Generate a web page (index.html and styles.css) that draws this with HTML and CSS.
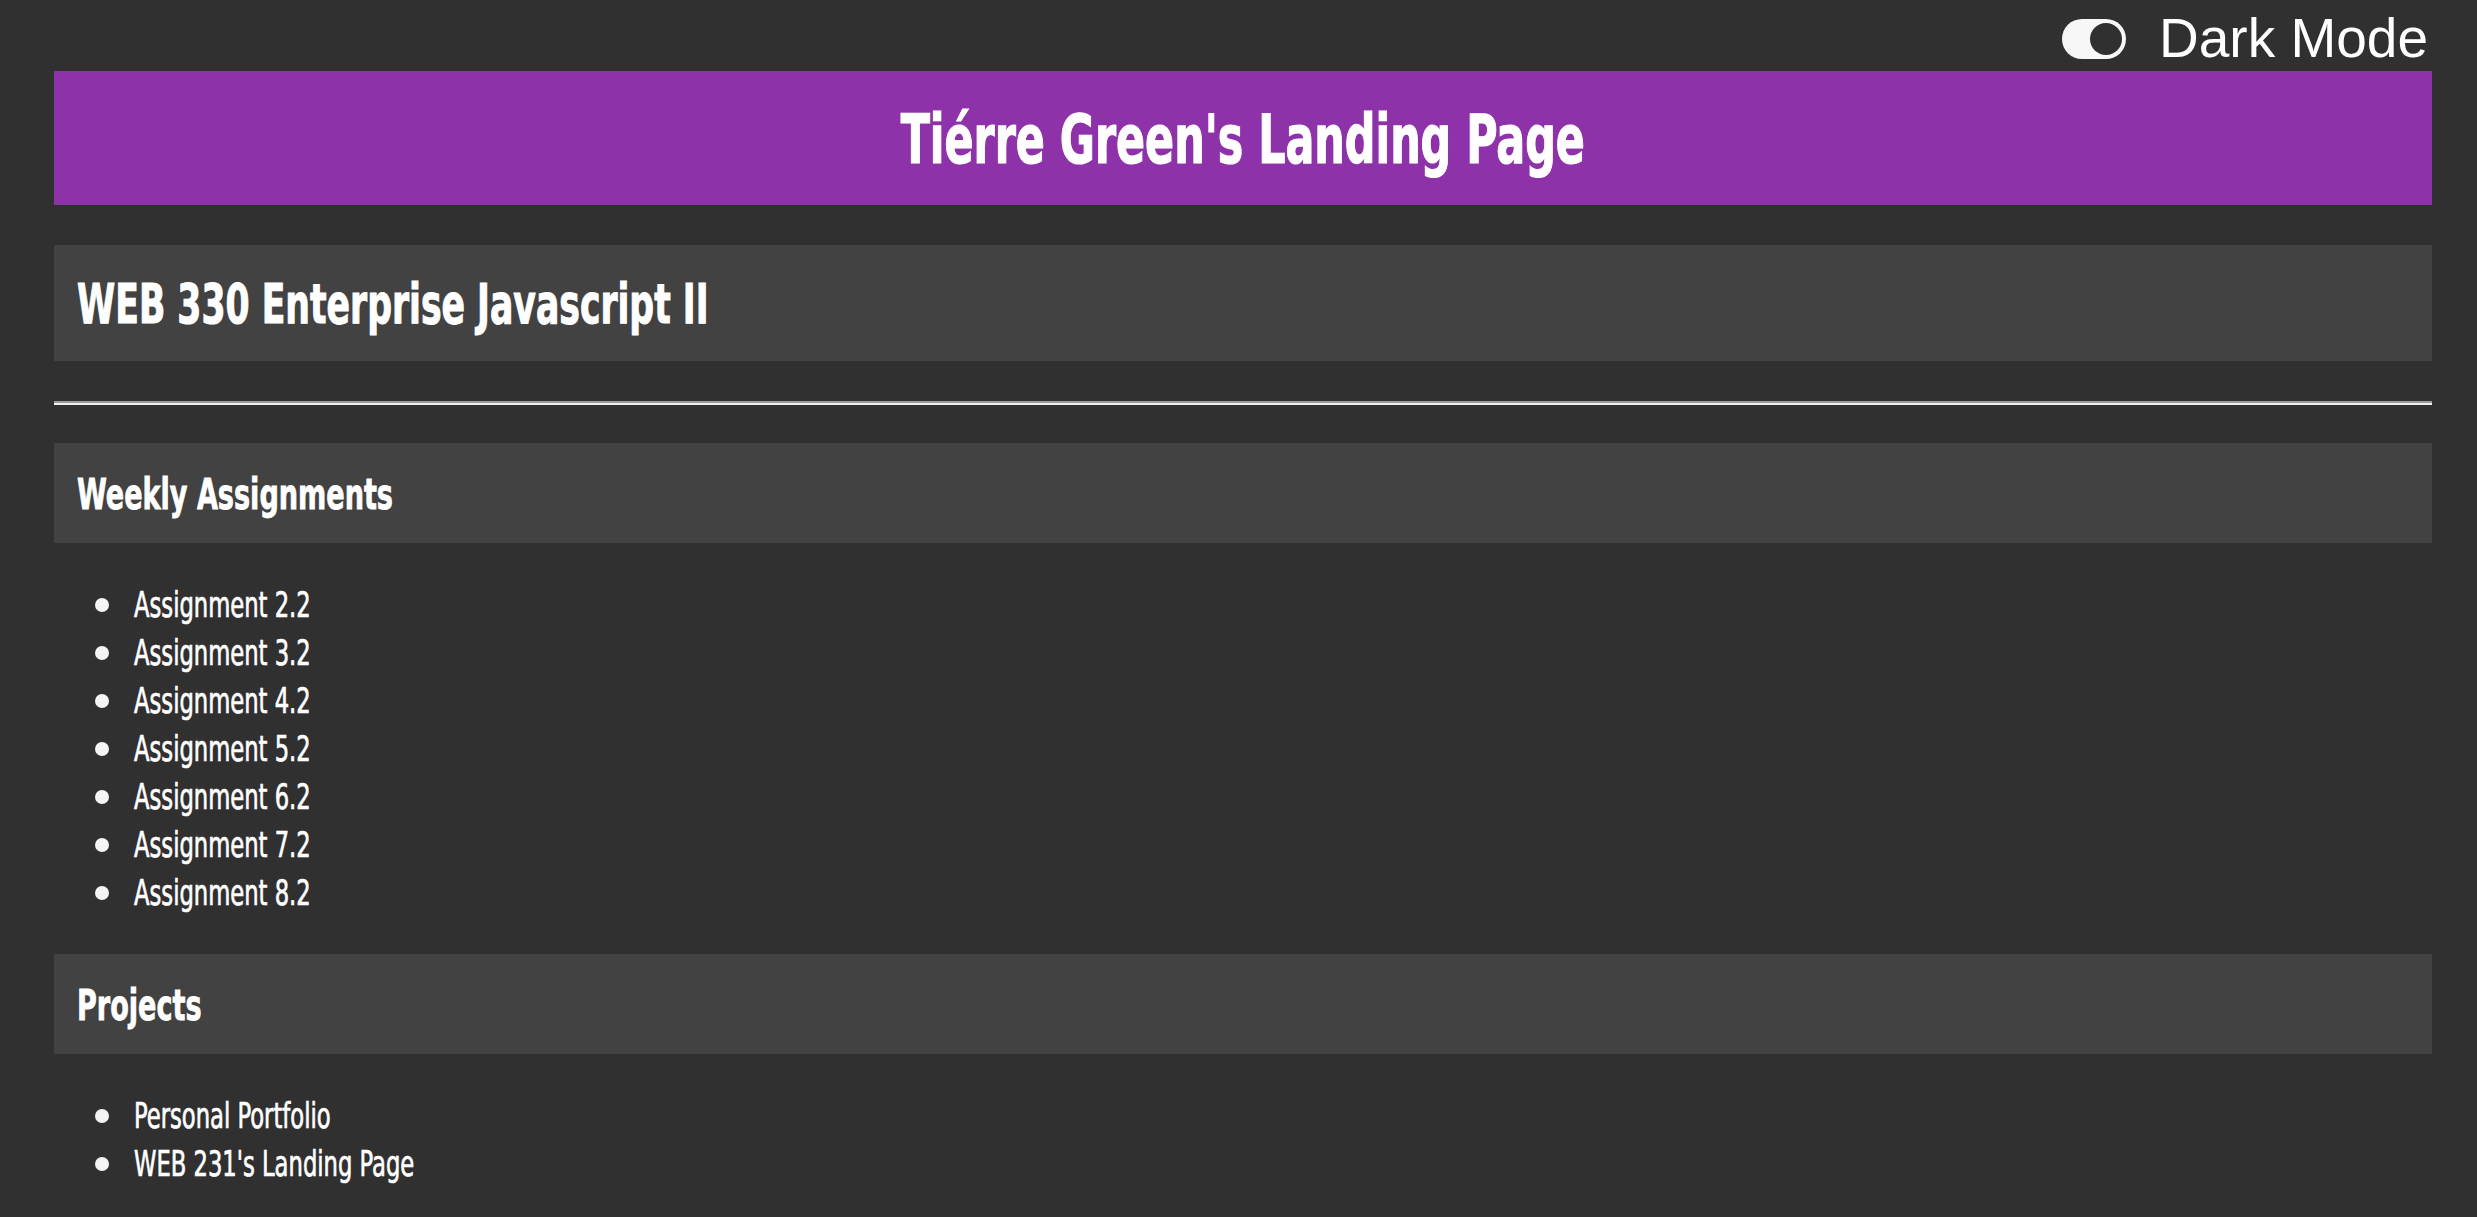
FILE: index.html
```html
<!DOCTYPE html>
<html lang="en">
<head>
<meta charset="utf-8">
<title>Tiérre Green's Landing Page</title>
<link rel="stylesheet" href="styles.css">
</head>
<body>
<div class="page">
  <div class="topbar">
    <svg class="toggle" width="64" height="40" viewBox="0 0 64 40" aria-hidden="true">
      <rect x="0" y="0" width="64" height="40" rx="20" ry="20" fill="#f7f7f7"/>
      <circle cx="44" cy="20" r="16" fill="#303030"/>
    </svg>
    <span class="mode-label">Dark Mode</span>
  </div>
  <header class="banner">
    <h1 class="banner-title"><span class="narrow narrow-center">Tiérre Green's Landing Page</span></h1>
  </header>
  <section class="course">
    <h2 class="course-title"><span class="narrow">WEB 330 Enterprise Javascript II</span></h2>
  </section>
  <hr class="divider">
  <section class="section-head">
    <h3 class="section-title"><span class="narrow">Weekly Assignments</span></h3>
  </section>
  <ul class="items">
    <li class="item"><span class="narrow">Assignment 2.2</span></li>
    <li class="item"><span class="narrow">Assignment 3.2</span></li>
    <li class="item"><span class="narrow">Assignment 4.2</span></li>
    <li class="item"><span class="narrow">Assignment 5.2</span></li>
    <li class="item"><span class="narrow">Assignment 6.2</span></li>
    <li class="item"><span class="narrow">Assignment 7.2</span></li>
    <li class="item"><span class="narrow">Assignment 8.2</span></li>
  </ul>
  <section class="section-head">
    <h3 class="section-title"><span class="narrow">Projects</span></h3>
  </section>
  <ul class="items">
    <li class="item"><span class="narrow">Personal Portfolio</span></li>
    <li class="item"><span class="narrow">WEB 231's Landing Page</span></li>
  </ul>
</div>
</body>
</html>
```

FILE: styles.css
```css
html, body {
  margin: 0;
  padding: 0;
  background: #303030;
}

body {
  color: #ffffff;
  font-family: "DejaVu Sans Condensed", "DejaVu Sans", sans-serif;
}

.page {
  padding: 0 45px 40px 54px;
}

/* condensed look of the original display face */
.narrow {
  display: inline-block;
  white-space: nowrap;
  transform: scaleX(0.7);
  transform-origin: left center;
}

.narrow-center {
  transform-origin: center center;
}

.topbar {
  height: 71px;
  box-sizing: border-box;
  padding-top: 7px;
  display: flex;
  justify-content: flex-end;
  align-items: flex-start;
  gap: 33px;
}

.toggle {
  display: block;
  margin-top: 12px;
  flex: none;
}

.mode-label {
  font-family: "Liberation Sans", Arial, sans-serif;
  font-size: 55px;
  line-height: 63px;
  color: #ffffff;
  margin-right: 4px;
}

.banner {
  height: 134px;
  background: #8e32a9;
  display: flex;
  align-items: center;
  justify-content: center;
  padding-top: 4px;
  box-sizing: border-box;
}

.banner-title {
  margin: 0;
  font-size: 68px;
  font-weight: 700;
  line-height: 1.15;
  -webkit-text-stroke: 1.2px #ffffff;
}

.course {
  margin-top: 40px;
  height: 116px;
  background: #424242;
  display: flex;
  align-items: center;
  padding: 4px 0 0 23px;
  box-sizing: border-box;
}

.course-title {
  margin: 0;
  font-size: 55px;
  font-weight: 700;
  line-height: 1.15;
  -webkit-text-stroke: 1px #ffffff;
}

.divider {
  margin: 40px 0 38px;
  height: 0;
  border: 0;
  border-top: 2px solid #9c9c9c;
  border-bottom: 2px solid #efefef;
}

.section-head {
  height: 100px;
  background: #424242;
  display: flex;
  align-items: center;
  padding: 4px 0 0 23px;
  box-sizing: border-box;
}

.section-title {
  margin: 0;
  font-size: 43px;
  font-weight: 700;
  line-height: 1.15;
  -webkit-text-stroke: 0.8px #ffffff;
}

.items {
  list-style: none;
  margin: 38px 0 37px;
  padding: 0 0 0 41px;
}

.item {
  display: flex;
  align-items: center;
  height: 48px;
  font-size: 36px;
  font-weight: 400;
  line-height: 48px;
  -webkit-text-stroke: 0.7px #ffffff;
}

.item::before {
  content: "";
  flex: none;
  width: 14px;
  height: 14px;
  border-radius: 50%;
  background: #f4f4f4;
  margin-right: 25px;
}
```
